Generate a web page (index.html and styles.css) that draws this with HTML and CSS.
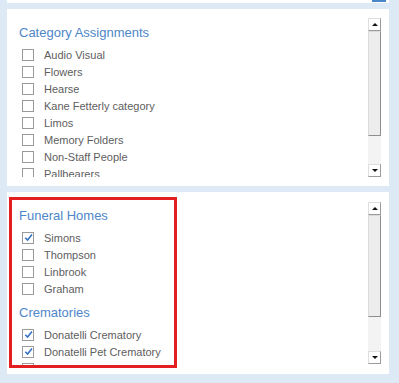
FILE: index.html
```html
<!DOCTYPE html>
<html lang="en">
<head>
  <meta charset="UTF-8">
  <meta name="viewport" content="width=device-width, initial-scale=1.0">
  <title>Assignments</title>
  <link rel="stylesheet" href="styles.css">
</head>
<body>
  <div class="page">
    <div class="top-panel">
      <span class="top-button"></span>
    </div>

    <!-- Категории -->
    <section class="panel panel-categories">
      <div class="list">
        <h2 class="list-title">Category Assignments</h2>
        <label class="row"><span class="box"></span>Audio Visual</label>
        <label class="row"><span class="box"></span>Flowers</label>
        <label class="row"><span class="box"></span>Hearse</label>
        <label class="row"><span class="box"></span>Kane Fetterly category</label>
        <label class="row"><span class="box"></span>Limos</label>
        <label class="row"><span class="box"></span>Memory Folders</label>
        <label class="row"><span class="box"></span>Non-Staff People</label>
        <label class="row"><span class="box"></span>Pallbearers</label>
      </div>
      <div class="scrollbar scrollbar-categories">
        <div class="scroll-btn"><span class="arrow-up"></span></div>
        <div class="scroll-thumb"></div>
        <div class="scroll-track"></div>
        <div class="scroll-btn"><span class="arrow-down"></span></div>
      </div>
    </section>

    <!-- Дома и крематории -->
    <section class="panel panel-homes">
      <div class="list highlight">
        <h2 class="list-title">Funeral Homes</h2>
        <label class="row"><span class="box checked"><svg viewBox="0 0 12 12"><path d="M2.5 6.2 L5 8.8 L9.8 2.8"/></svg></span>Simons</label>
        <label class="row"><span class="box"></span>Thompson</label>
        <label class="row"><span class="box"></span>Linbrook</label>
        <label class="row"><span class="box"></span>Graham</label>
        <h2 class="list-title list-title-next">Crematories</h2>
        <label class="row"><span class="box checked"><svg viewBox="0 0 12 12"><path d="M2.5 6.2 L5 8.8 L9.8 2.8"/></svg></span>Donatelli Crematory</label>
        <label class="row"><span class="box checked"><svg viewBox="0 0 12 12"><path d="M2.5 6.2 L5 8.8 L9.8 2.8"/></svg></span>Donatelli Pet Crematory</label>
        <label class="row"><span class="box"></span></label>
      </div>
      <div class="scrollbar scrollbar-homes">
        <div class="scroll-btn"><span class="arrow-up"></span></div>
        <div class="scroll-thumb"></div>
        <div class="scroll-track"></div>
        <div class="scroll-btn"><span class="arrow-down"></span></div>
      </div>
    </section>

    <div class="more">
      <svg viewBox="0 0 14 8"><path d="M1 1 L4 5 L7 1 M7 1 L10 5 L13 1"/></svg>
    </div>
  </div>
</body>
</html>
```

FILE: styles.css
```css
body {
  margin: 0;
  font-family: "Liberation Sans", Arial, sans-serif;
  background-color: #dde9f5;
  color: #5e5e5e;
  overflow: hidden;
}
.page {
  padding: 0 10px 0 7px;
}
.top-panel {
  height: 3px;
  background-color: #ffffff;
  display: flex;
  justify-content: flex-end;
  padding-right: 3px;
}
.top-button {
  width: 14px;
  height: 2px;
  background-color: #4a86c8;
}
.panel {
  margin-top: 6px;
  background-color: #ffffff;
  display: flex;
}
.panel-categories {
  height: 159px;
  padding: 9px 8px 9px 2px;
}
.panel-homes {
  height: 171px;
  padding: 5px 8px 6px 2px;
}
.list {
  flex: 1;
  overflow: hidden;
  padding: 6px 0 0 10px;
}
.highlight {
  flex: none;
  width: 168px;
  box-sizing: border-box;
  border: 3px solid #e41f1f;
  padding: 7px 0 0 7px;
}
.list-title {
  margin: 0 0 4px;
  font-size: 13px;
  line-height: 18px;
  font-weight: normal;
  color: #4d86c9;
  white-space: nowrap;
}
.list-title-next {
  margin-top: 7px;
}
.row {
  display: flex;
  align-items: center;
  height: 17px;
  font-size: 11px;
  white-space: nowrap;
}
.box {
  width: 10px;
  height: 10px;
  margin: 0 10px 0 3px;
  border: 1px solid #9a9a9a;
  background-color: #ffffff;
  position: relative;
  flex: none;
}
.box svg {
  position: absolute;
  left: 0;
  top: -1px;
  width: 11px;
  height: 11px;
}
.box svg path {
  fill: none;
  stroke: #3572c2;
  stroke-width: 1.7;
}
.scrollbar {
  margin-left: auto;
  width: 13px;
  display: flex;
  flex-direction: column;
  background-color: #f3f3f3;
}
.scrollbar-homes {
  margin-top: 5px;
  height: 162px;
}
.scroll-btn {
  height: 11px;
  border: 1px solid #dedede;
  border-right-color: #9a9a9a;
  border-bottom-color: #9a9a9a;
  background-color: #ffffff;
  display: flex;
  align-items: center;
  justify-content: center;
  box-sizing: content-box;
  width: 11px;
}
.arrow-up, .arrow-down {
  width: 0;
  height: 0;
  border-left: 3px solid transparent;
  border-right: 3px solid transparent;
}
.arrow-up {
  border-bottom: 3px solid #111111;
}
.arrow-down {
  border-top: 3px solid #111111;
}
.scroll-thumb {
  width: 11px;
  border: 1px solid #dadada;
  border-right-color: #8e8e8e;
  border-bottom-color: #8e8e8e;
  background-color: #ededed;
}
.scrollbar-categories .scroll-thumb {
  height: 103px;
}
.scrollbar-homes .scroll-thumb {
  height: 100px;
}
.scroll-track {
  flex: 1;
}
.more {
  margin: 7px 0 0 163px;
  height: 10px;
}
.more svg {
  width: 14px;
  height: 8px;
}
.more svg path {
  fill: none;
  stroke: #4a86c8;
  stroke-width: 2;
}
```
